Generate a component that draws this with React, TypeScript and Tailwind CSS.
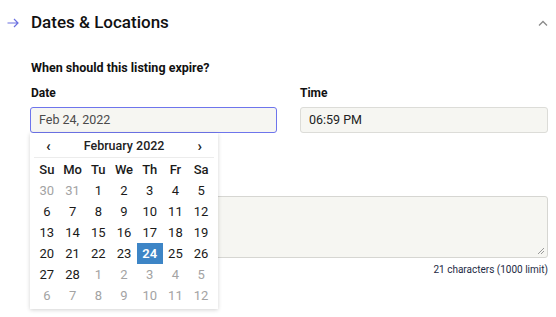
import { useState } from "react";

const weeks: { d: number; muted?: boolean }[][] = [
  [{ d: 30, muted: true }, { d: 31, muted: true }, { d: 1 }, { d: 2 }, { d: 3 }, { d: 4 }, { d: 5 }],
  [{ d: 6 }, { d: 7 }, { d: 8 }, { d: 9 }, { d: 10 }, { d: 11 }, { d: 12 }],
  [{ d: 13 }, { d: 14 }, { d: 15 }, { d: 16 }, { d: 17 }, { d: 18 }, { d: 19 }],
  [{ d: 20 }, { d: 21 }, { d: 22 }, { d: 23 }, { d: 24 }, { d: 25 }, { d: 26 }],
  [{ d: 27 }, { d: 28 }, { d: 1, muted: true }, { d: 2, muted: true }, { d: 3, muted: true }, { d: 4, muted: true }, { d: 5, muted: true }],
  [{ d: 6, muted: true }, { d: 7, muted: true }, { d: 8, muted: true }, { d: 9, muted: true }, { d: 10, muted: true }, { d: 11, muted: true }, { d: 12, muted: true }],
];

const dayNames = ["Su", "Mo", "Tu", "We", "Th", "Fr", "Sa"];

function Calendar() {
  const [selected, setSelected] = useState(24);
  return (
    <div className="absolute left-0 top-full z-10 w-[188px] bg-white px-[4px] pb-[3px] shadow-[0_1px_4px_rgba(0,0,0,0.18)]">
      <div className="flex h-[25px] items-center justify-between border-b border-[#ececec] px-[12px] pt-[3px] text-[12.5px] font-medium text-[#222]">
        <button type="button" className="text-[15px] font-bold leading-none">‹</button>
        <span>February 2022</span>
        <button type="button" className="text-[15px] font-bold leading-none">›</button>
      </div>
      <div className="grid grid-cols-7 text-center text-[13px] text-[#1a1a1a]">
        {dayNames.map((n) => (
          <div key={n} className="flex h-[22px] items-center justify-center pt-[2px] font-medium">
            {n}
          </div>
        ))}
        {weeks.flat().map((c, i) => {
          const active = !c.muted && c.d === selected;
          return (
            <button
              type="button"
              key={i}
              onClick={() => !c.muted && setSelected(c.d)}
              className={
                active
                  ? "flex h-[21px] items-center justify-center bg-[#3d85c6] font-semibold text-white"
                  : c.muted
                    ? "flex h-[21px] items-center justify-center text-[#a3a3a3]"
                    : "flex h-[21px] items-center justify-center text-[#1a1a1a]"
              }
            >
              {c.d}
            </button>
          );
        })}
      </div>
    </div>
  );
}

export default function App() {
  return (
    <div className="h-[317px] w-[556px] overflow-hidden bg-white font-['Roboto',sans-serif] text-[#111]">
      <div className="flex h-[46px] items-center pl-[7px] pr-[6px]">
        <svg width="12" height="10" viewBox="0 0 12 10" fill="none" stroke="#6b70e0" strokeWidth="1.2">
          <path d="M0.5 5h10.5M7 1l4 4-4 4" />
        </svg>
        <h2 className="ml-[12px] text-[17px] font-medium">Dates &amp; Locations</h2>
        <svg className="ml-auto mr-[2px]" width="10" height="7" viewBox="0 0 10 7" fill="none" stroke="#8a8a8a" strokeWidth="1.3">
          <path d="M1 5.5l4-4 4 4" />
        </svg>
      </div>

      <div className="pl-[30px] pr-[8px]">
        <p className="mt-[14px] pl-[1px] text-[12.5px] font-bold leading-[16px]">When should this listing expire?</p>

        <div className="mt-[9px] flex gap-[23px]">
          <div className="relative w-[247px]">
            <label className="block pl-[1px] text-[12px] font-bold leading-[16px]">Date</label>
            <div className="mt-[6px] flex h-[26px] items-center rounded-[3px] border border-[#6e75ec] bg-[#f6f6f2] pl-[8px] text-[12.5px] text-[#4a4a4a]">
              Feb 24, 2022
            </div>
            <Calendar />
          </div>
          <div className="flex-1">
            <label className="block text-[12px] font-bold leading-[16px]">Time</label>
            <div className="mt-[6px] flex h-[26px] items-center rounded-[3px] border border-[#dcdcd8] bg-[#f6f6f2] pl-[8px] text-[12.5px] text-[#222]">
              06:59 PM
            </div>
          </div>
        </div>

        <div className="relative mt-[63px] h-[62px] rounded-[3px] border border-[#d6d6d2] bg-[#f6f6f2]">
          <svg className="absolute bottom-[2px] right-[2px]" width="8" height="8" viewBox="0 0 8 8" stroke="#9a9a9a" strokeWidth="1">
            <path d="M7 1L1 7M7 4L4 7" />
          </svg>
        </div>
        <p className="mt-[4px] text-right text-[10px] text-[#1d2a44]">21 characters (1000 limit)</p>
      </div>
    </div>
  );
}
